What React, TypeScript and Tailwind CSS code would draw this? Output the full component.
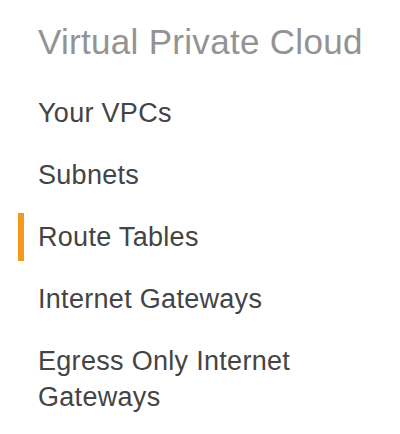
import React from "react";

const items = [
  { label: "Your VPCs", active: false },
  { label: "Subnets", active: false },
  { label: "Route Tables", active: true },
  { label: "Internet Gateways", active: false },
  { label: "Egress Only Internet Gateways", active: false },
];

export default function App() {
  return (
    <div
      className="w-[400px] h-[434px] bg-white overflow-hidden"
      style={{ fontFamily: '"Liberation Sans", Arial, sans-serif' }}
    >
      <div className="pt-[21px] pl-[38px] pr-[10px] text-[35px] leading-[42px] tracking-[0.3px] text-[#939393] whitespace-nowrap">
        Virtual Private Cloud
      </div>
      <ul className="mt-[26px] flex flex-col gap-[14px]">
        {items.map((it) => (
          <li key={it.label} className="flex">
            <div className={`ml-[18px] w-[6px] shrink-0 ${it.active ? "bg-[#f7981c]" : ""}`} />
            <div className="pl-[14px] w-[320px] py-[6px] text-[27px] leading-[36px] tracking-[0.3px] text-[#444444]">
              {it.label}
            </div>
          </li>
        ))}
      </ul>
    </div>
  );
}
